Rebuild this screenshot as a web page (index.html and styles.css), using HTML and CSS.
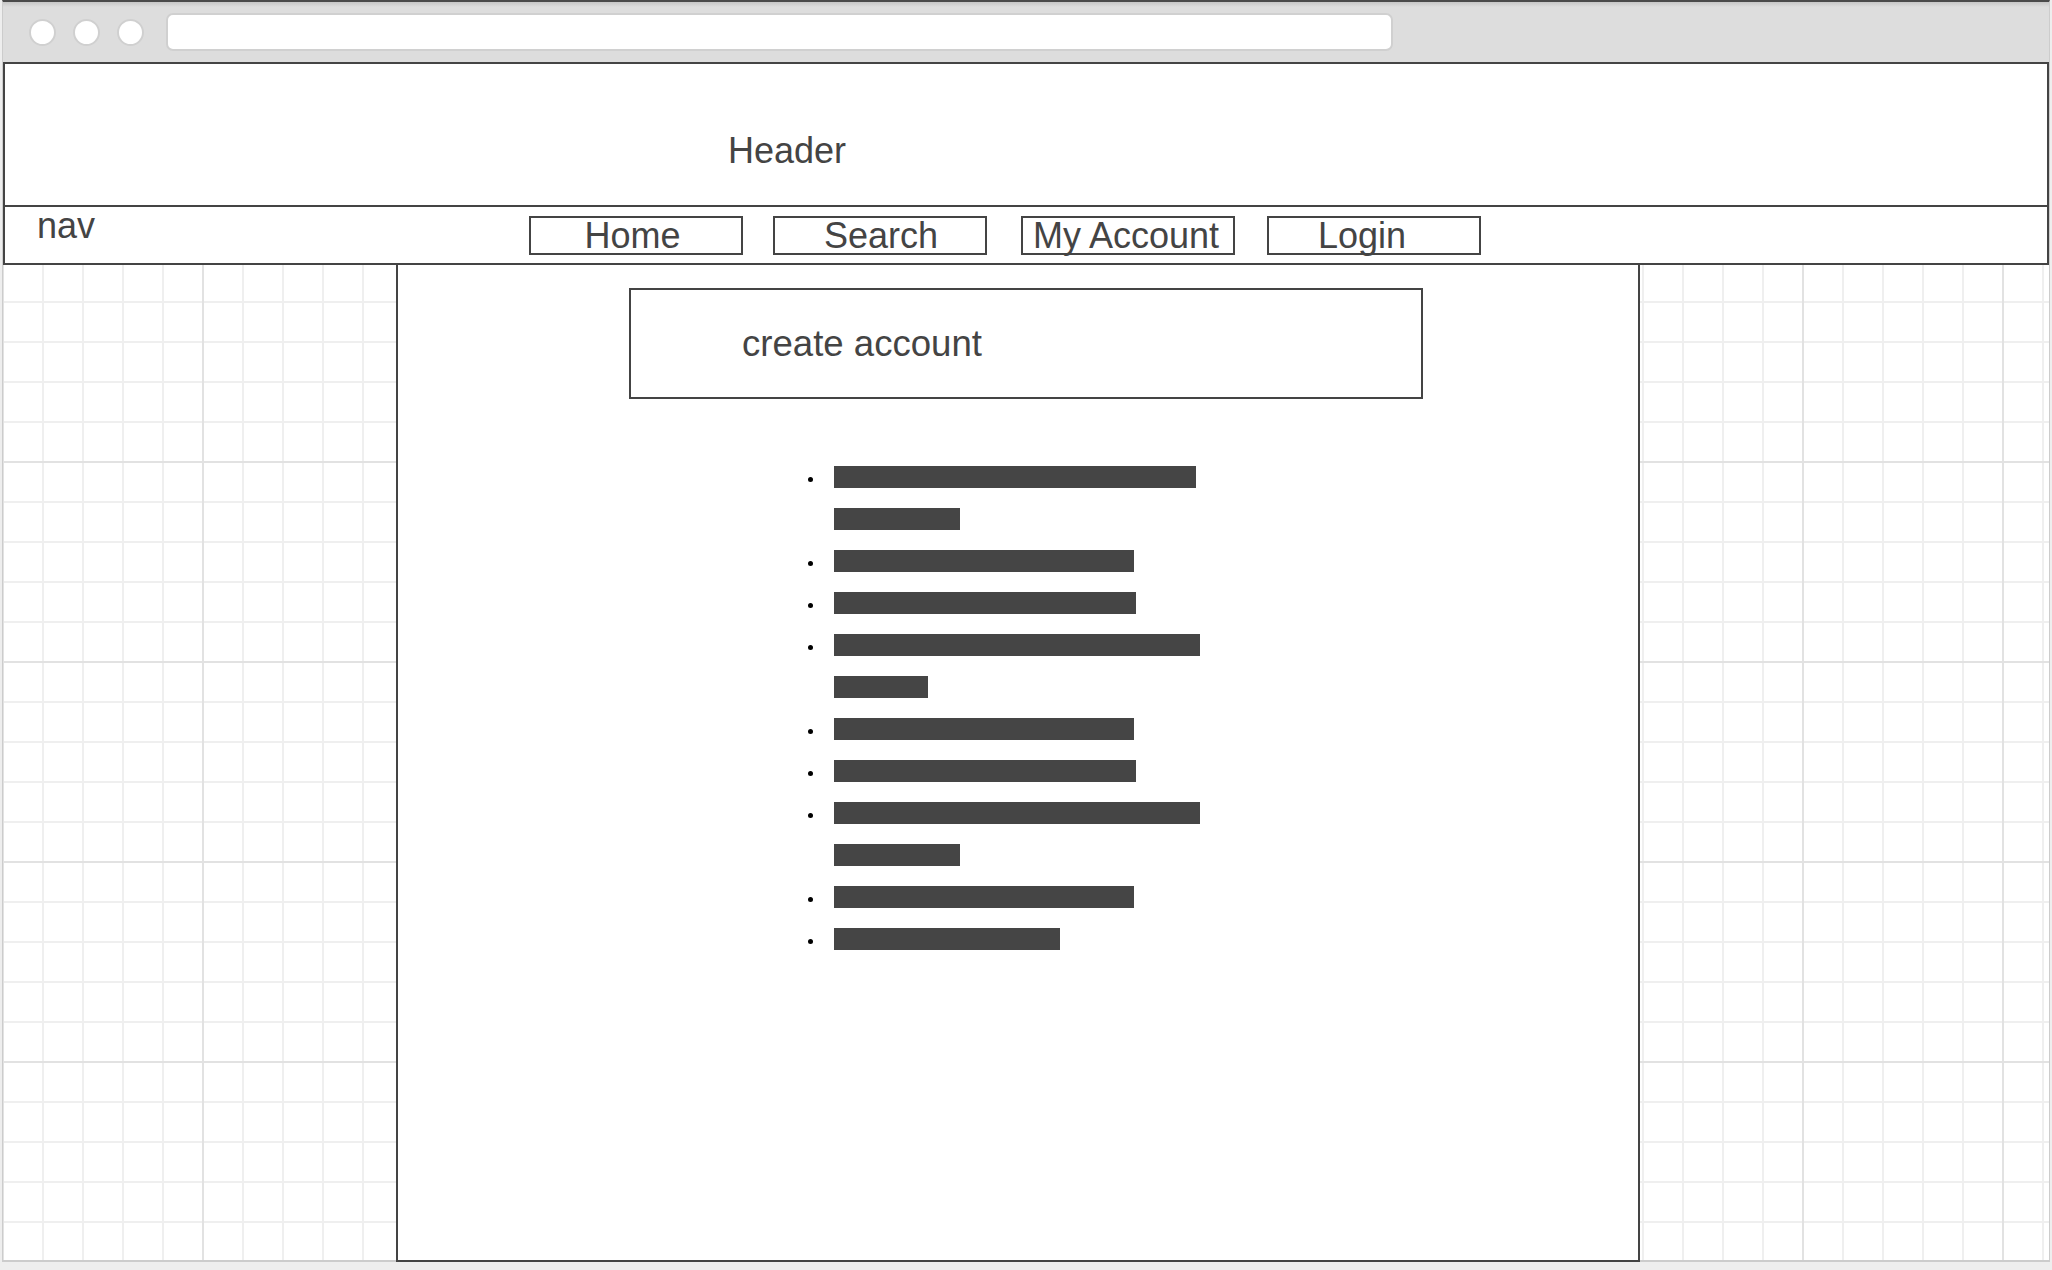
FILE: index.html
```html
<!DOCTYPE html>
<html lang="en">
<head>
<meta charset="utf-8">
<title>Wireframe</title>
<link rel="stylesheet" href="styles.css">
</head>
<body>
<div class="window">
  <div class="chrome">
    <span class="dot"></span>
    <span class="dot"></span>
    <span class="dot"></span>
    <div class="url"></div>
  </div>
  <div class="canvas">
    <header class="header"><span class="header-title">Header</span></header>
    <nav class="nav">
      <span class="nav-label">nav</span>
      <div class="nav-links">
        <a class="nav-btn nav-home"><span class="nav-text">Home</span></a>
        <a class="nav-btn nav-search"><span class="nav-text">Search</span></a>
        <a class="nav-btn nav-account"><span class="nav-text">My Account</span></a>
        <a class="nav-btn nav-login"><span class="nav-text">Login</span></a>
      </div>
    </nav>
    <main class="main">
      <div class="cta">create account</div>
      <ul class="list">
        <li class="item"><div class="lines"><span class="bar" style="width:362px"></span><span class="bar" style="width:126px"></span></div></li>
        <li class="item"><div class="lines"><span class="bar" style="width:300px"></span></div></li>
        <li class="item"><div class="lines"><span class="bar" style="width:302px"></span></div></li>
        <li class="item"><div class="lines"><span class="bar" style="width:366px"></span><span class="bar" style="width:94px"></span></div></li>
        <li class="item"><div class="lines"><span class="bar" style="width:300px"></span></div></li>
        <li class="item"><div class="lines"><span class="bar" style="width:302px"></span></div></li>
        <li class="item"><div class="lines"><span class="bar" style="width:366px"></span><span class="bar" style="width:126px"></span></div></li>
        <li class="item"><div class="lines"><span class="bar" style="width:300px"></span></div></li>
        <li class="item"><div class="lines"><span class="bar" style="width:226px"></span></div></li>
      </ul>
    </main>
  </div>
</div>
</body>
</html>
```

FILE: styles.css
```css
* {
  box-sizing: border-box;
}

html, body {
  margin: 0;
  padding: 0;
}

body {
  background: #eeeeee;
  width: 2052px;
  height: 1270px;
  overflow: hidden;
  font-family: "Liberation Sans", Arial, sans-serif;
  color: #444444;
}

.window {
  margin-left: 2px;
  width: 2048px;
  border-top: 2px solid #4a4a4a;
  border-left: 1px solid #cccccc;
  border-right: 1px solid #cccccc;
}

.chrome {
  height: 60px;
  display: flex;
  align-items: center;
  padding-left: 26px;
  background: linear-gradient(to bottom, #c6c6c6 0, #dddddd 5px, #dddddd 100%);
}

.dot {
  width: 27px;
  height: 27px;
  border-radius: 50%;
  background: #ffffff;
  border: 2px solid #d0d0d0;
  margin-right: 17px;
  flex: 0 0 auto;
}

.dot:nth-child(3) {
  margin-right: 22px;
}

.url {
  width: 1227px;
  height: 38px;
  background: #ffffff;
  border: 2px solid #d0d0d0;
  border-radius: 7px;
}

.canvas {
  height: 1200px;
  background-color: #ffffff;
  background-image:
    linear-gradient(to right, #e2e2e2 2px, transparent 2px),
    linear-gradient(to bottom, #e2e2e2 2px, transparent 2px),
    linear-gradient(to right, #efefef 2px, transparent 2px),
    linear-gradient(to bottom, #efefef 2px, transparent 2px);
  background-size: 200px 200px, 200px 200px, 40px 40px, 40px 40px;
  background-position: -1px -1px, -1px -1px, -1px -1px, -1px -1px;
  box-shadow: inset 0 -2px 0 #cccccc;
}

.header {
  display: block;
  height: 145px;
  border: 2px solid #444444;
  background: #ffffff;
  padding: 67px 0 0 723px;
}

.header-title {
  font-size: 36px;
  line-height: 40px;
}

.nav {
  display: flex;
  align-items: flex-start;
  height: 58px;
  border: 2px solid #444444;
  border-top: 0;
  background: #ffffff;
  padding-left: 32px;
}

.nav-label {
  flex: 0 0 492px;
  font-size: 36px;
  line-height: 38px;
}

.nav-links {
  display: flex;
  margin-top: 9px;
}

.nav-btn {
  display: flex;
  justify-content: center;
  width: 214px;
  height: 39px;
  border: 2px solid #444444;
  padding-top: 1px;
  color: #444444;
  text-decoration: none;
}

.nav-home {
  padding-right: 7px;
}

.nav-search {
  margin-left: 30px;
  padding-left: 2px;
}

.nav-account {
  margin-left: 34px;
  padding-right: 4px;
}

.nav-login {
  margin-left: 32px;
  padding-right: 24px;
}

.nav-text {
  font-size: 36px;
  line-height: 34px;
  white-space: nowrap;
}

.main {
  margin-left: 393px;
  width: 1244px;
  height: 997px;
  border: 2px solid #444444;
  border-top: 0;
  background: #ffffff;
  padding-top: 23px;
}

.cta {
  width: 794px;
  height: 111px;
  margin-left: 231px;
  border: 2px solid #444444;
  padding: 34px 0 0 111px;
  font-size: 36.6px;
  line-height: 40px;
}

.list {
  list-style: none;
  margin: 67px 0 0 410px;
  padding: 0;
  display: flex;
  flex-direction: column;
  gap: 20px;
}

.item {
  display: flex;
  align-items: flex-start;
}

.item::before {
  content: "";
  flex: 0 0 5px;
  width: 5px;
  height: 5px;
  margin-top: 11px;
  margin-right: 21px;
  border-radius: 50%;
  background: #000000;
}

.lines {
  display: flex;
  flex-direction: column;
  gap: 20px;
}

.bar {
  display: block;
  height: 22px;
  background: #454545;
}
```
